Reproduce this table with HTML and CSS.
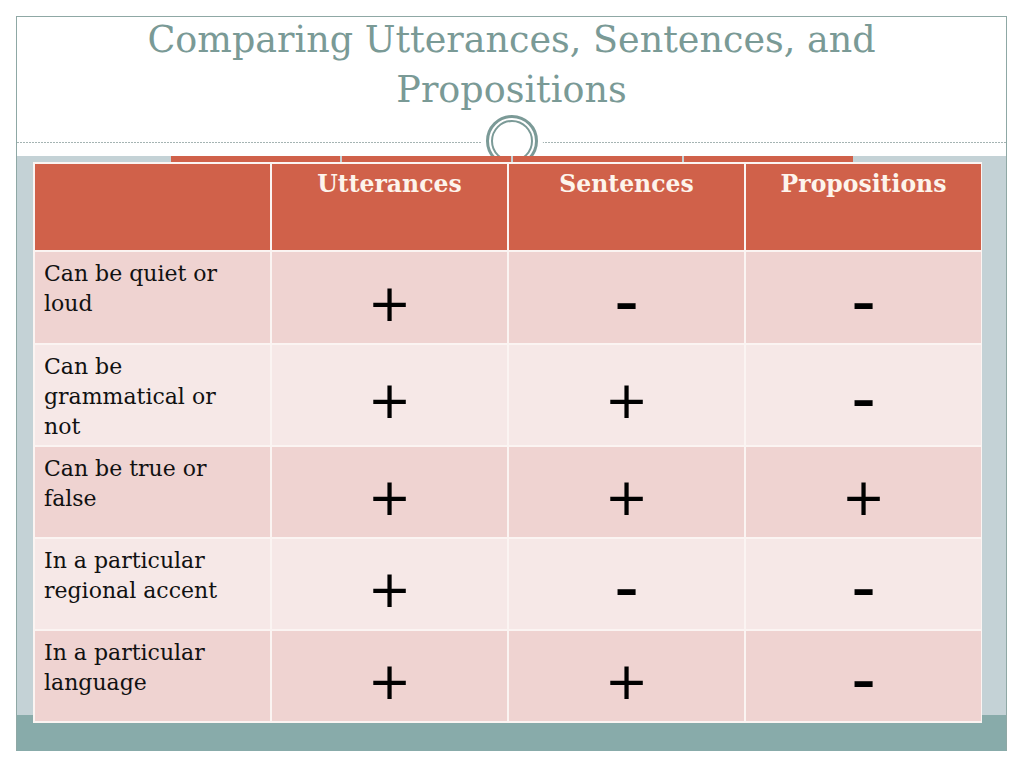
FILE: index.html
```html
<!DOCTYPE html>
<html>
<head>
<meta charset="utf-8">
<link rel="stylesheet" href="styles.css">
</head>
<body>
<div class="slide">
  <div class="head">
    <h1 class="title">Comparing Utterances, Sentences, and<br>Propositions</h1>
    <div class="rule"></div>
    <svg class="ornament" width="64" height="64" viewBox="0 0 64 64">
      <circle cx="32" cy="32" r="31" fill="#ffffff"/>
      <circle cx="32" cy="32" r="24.5" fill="none" stroke="#7b9a97" stroke-width="3"/>
      <circle cx="32" cy="32" r="20" fill="none" stroke="#7b9a97" stroke-width="2"/>
    </svg>
  </div>
  <div class="stage">
    <div class="strips">
      <span class="strip"></span><span class="strip"></span><span class="strip"></span><span class="strip"></span>
    </div>
    <div class="grid">
      <div class="cell hd"></div>
      <div class="cell hd">Utterances</div>
      <div class="cell hd">Sentences</div>
      <div class="cell hd">Propositions</div>

      <div class="cell lbl odd">Can be quiet or loud</div>
      <div class="cell mark odd"><span class="plus">+</span></div>
      <div class="cell mark odd"><span class="minus">-</span></div>
      <div class="cell mark odd"><span class="minus">-</span></div>

      <div class="cell lbl even">Can be grammatical or not</div>
      <div class="cell mark even"><span class="plus">+</span></div>
      <div class="cell mark even"><span class="plus">+</span></div>
      <div class="cell mark even"><span class="minus">-</span></div>

      <div class="cell lbl odd">Can be true or false</div>
      <div class="cell mark odd"><span class="plus">+</span></div>
      <div class="cell mark odd"><span class="plus">+</span></div>
      <div class="cell mark odd"><span class="plus">+</span></div>

      <div class="cell lbl even">In a particular regional accent</div>
      <div class="cell mark even"><span class="plus">+</span></div>
      <div class="cell mark even"><span class="minus">-</span></div>
      <div class="cell mark even"><span class="minus">-</span></div>

      <div class="cell lbl odd">In a particular language</div>
      <div class="cell mark odd"><span class="plus">+</span></div>
      <div class="cell mark odd"><span class="plus">+</span></div>
      <div class="cell mark odd"><span class="minus">-</span></div>
    </div>
  </div>
</div>
</body>
</html>
```
FILE: styles.css
```css
html, body {
  margin: 0;
  padding: 0;
  background: #ffffff;
}
body {
  font-family: "DejaVu Serif", "Liberation Serif", serif;
}
.slide {
  margin: 16px 0 0 16px;
  width: 989px;
  height: 734px;
  border: 1px solid #8fa8a5;
  border-bottom: none;
  display: flex;
  flex-direction: column;
}
.head {
  position: relative;
  height: 139px;
  flex: none;
}
.title {
  margin: -2px 0 0 0;
  height: 126px;
  text-align: center;
  font-weight: normal;
  font-size: 36.5px;
  line-height: 50px;
  color: #7a9a96;
}
.rule {
  margin-top: 1px;
  height: 1px;
  background: repeating-linear-gradient(90deg, #a5b4b3 0, #a5b4b3 2px, transparent 2px, transparent 3px);
}
.ornament {
  position: absolute;
  left: 463px;
  top: 92px;
}
.stage {
  position: relative;
  flex: 1;
  background: linear-gradient(#c4d2d6 0, #c4d2d6 calc(100% - 36px), #88abaa calc(100% - 36px));
  padding: 0 0 0 16px;
}
.strips {
  display: flex;
  gap: 2px;
  margin-left: 138px;
  height: 6px;
}
.strip {
  width: 169px;
  height: 6px;
  background: #d0614a;
}
.grid {
  width: 949px;
  box-sizing: border-box;
  display: grid;
  grid-template-columns: 235px 235px 235px 235px;
  grid-template-rows: 86px 91px 100px 90px 90px 90px;
  gap: 2px;
  padding: 2px;
  background: #fbf4f2;
}
.cell {
  box-sizing: border-box;
}
.hd {
  background: #d0614a;
  color: #fdf4ec;
  font-weight: bold;
  font-size: 23.5px;
  line-height: 26px;
  text-align: center;
  padding-top: 7px;
}
.odd { background: #efd3d1; }
.even { background: #f6e8e7; }
.lbl {
  font-size: 22px;
  line-height: 30px;
  color: #111111;
  padding: 7px 14px 0 9px;
}
.mark {
  display: flex;
  justify-content: center;
  align-items: center;
  padding-top: 10px;
  color: #000000;
}
.plus {
  font-family: "DejaVu Sans", sans-serif;
  font-size: 52px;
  line-height: 1;
}
.minus {
  font-family: "Liberation Sans", Arial, sans-serif;
  font-size: 74px;
  line-height: 1;
  margin-top: -4px;
}
```
